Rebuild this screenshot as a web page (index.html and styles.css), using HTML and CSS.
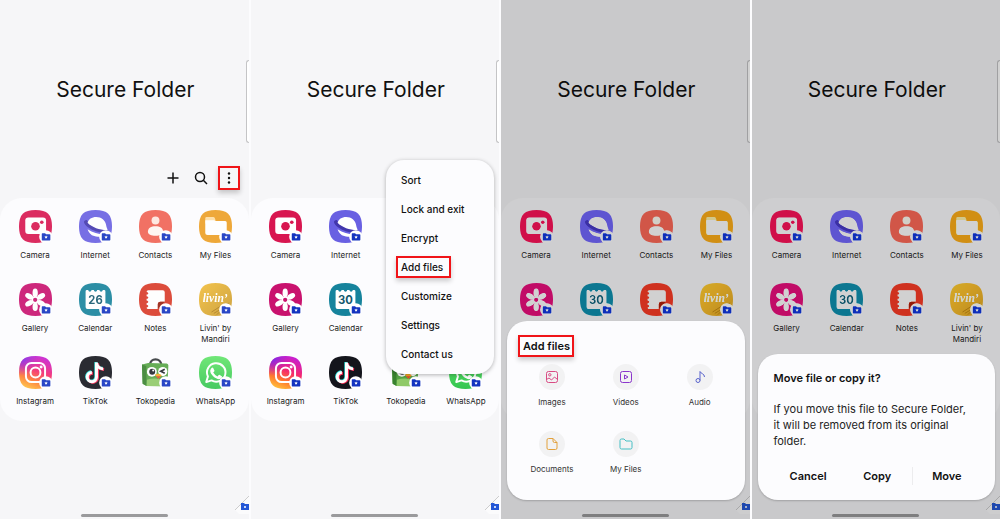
FILE: index.html
```html
<!DOCTYPE html>
<html lang="en">
<head>
<meta charset="utf-8">
<meta name="viewport" content="width=device-width, initial-scale=1">
<title>Secure Folder</title>
<link rel="stylesheet" href="styles.css">
</head>
<body>
<svg class="sprite" aria-hidden="true">
  <defs>
    <linearGradient id="g-insta" x1="0.2" y1="1" x2="0.6" y2="0">
      <stop offset="0" stop-color="#ffc83c"/><stop offset="0.3" stop-color="#ff7a2e"/><stop offset="0.6" stop-color="#f4286e"/><stop offset="1" stop-color="#c81fd0"/>
    </linearGradient>
    <radialGradient id="g-insta2" cx="0.05" cy="0" r="0.6">
      <stop offset="0" stop-color="#5a2cff"/><stop offset="1" stop-color="#a020f0" stop-opacity="0"/>
    </radialGradient>
    <linearGradient id="g-gold" x1="0" y1="0" x2="1" y2="1">
      <stop offset="0" stop-color="#f3be3a"/><stop offset="1" stop-color="#c99a2e"/>
    </linearGradient>
    <linearGradient id="g-wa" x1="0" y1="0" x2="0" y2="1">
      <stop offset="0" stop-color="#62e56a"/><stop offset="1" stop-color="#33c550"/>
    </linearGradient>
    <path id="sq" d="M50 0C86 0 100 14 100 50S86 100 50 100 0 86 0 50 14 0 50 0Z"/>
    <g id="badge">
      <circle cx="81" cy="81" r="20" fill="#fff"/>
      <path fill="#1434c0" d="M69 72.500q0-2 2-2h8l3 3h11q2 0 2 2v15q0 2-2 2h-22q-2 0-2-2z"/>
      <path fill="#fff" d="M82 77l1.500 3 3.500.5-2.500 2.500.5 3.500-3-1.500-3 1.500.5-3.500-2.500-2.500 3.500-.5z"/>
    </g>
  </defs>
  <symbol id="camera" viewBox="0 0 100 100">
    <use href="#sq" fill="#d81650"/>
    <rect x="19" y="23" width="63" height="50" rx="9" fill="#fff"/>
    <circle cx="50" cy="49" r="13" fill="#d81650"/><circle cx="69" cy="37" r="5.500" fill="#d81650"/>
    <use href="#badge"/>
  </symbol>
  <symbol id="internet" viewBox="0 0 100 100">
    <use href="#sq" fill="#6960e2"/>
    <path fill="#4237ac" d="M24 30C10 30 14 42 27 52C46 65 68 71 88 69L88 60C64 60 44 52 30 42Z"/>
    <path fill="#fff" d="M26 39C28 28 39 21 52 21C68 21 80 31 82 45C83 52 86 58 87 61C66 62 40 54 26 39Z"/>
    <path fill="#fff" d="M26 58C42 68 58 73 76 74C68 81 56 83 46 79C36 76 29 68 26 58Z"/>
    <use href="#badge"/>
  </symbol>
  <symbol id="contacts" viewBox="0 0 100 100">
    <use href="#sq" fill="#f06354"/>
    <circle cx="50" cy="32" r="12" fill="#ffe6de"/>
    <path fill="#fff6f2" d="M27 66C27 54 37 49 50 49S73 54 73 66C73 75 63 78 50 78S27 75 27 66Z"/>
    <use href="#badge"/>
  </symbol>
  <symbol id="files" viewBox="0 0 100 100">
    <use href="#sq" fill="#eda024"/>
    <path fill="#ffdda0" d="M19 25q0-4 4-4h20q4 0 5 4l2 6v10h-31z"/>
    <path fill="#fff" d="M19 31h26q3 0 5 2l1 0h28q5 0 5 5v32q0 6-6 6h-52q-7 0-7-6z"/>
    <use href="#badge"/>
  </symbol>
  <symbol id="gallery" viewBox="0 0 100 100">
    <use href="#sq" fill="#c9126e"/>
    <g fill="#fff">
      <ellipse cx="49" cy="30" rx="8" ry="13"/>
      <ellipse cx="49" cy="30" rx="8" ry="13" transform="rotate(60 49 51)"/>
      <ellipse cx="49" cy="30" rx="8" ry="13" transform="rotate(120 49 51)"/>
      <ellipse cx="49" cy="30" rx="8" ry="13" transform="rotate(180 49 51)"/>
      <ellipse cx="49" cy="30" rx="8" ry="13" transform="rotate(240 49 51)"/>
      <ellipse cx="49" cy="30" rx="8" ry="13" transform="rotate(300 49 51)"/>
      <circle cx="49" cy="51" r="11"/>
    </g>
    <circle cx="49" cy="51" r="6.500" fill="#c9126e"/>
    <use href="#badge"/>
  </symbol>
  <symbol id="calendar" viewBox="0 0 100 100">
    <use href="#sq" fill="#16839c"/>
    <path fill="#fff" d="M20 25q0-4 4-4h4c1 7 9 7 10 0h7c1 7 9 7 10 0h7c1 7 9 7 10 0h4q4 0 4 4v48q0 6-6 6h-48q-6 0-6-6z"/>
  </symbol>
  <symbol id="notes" viewBox="0 0 100 100">
    <use href="#sq" fill="#d93a28"/>
    <path fill="#fff" d="M28 22h44q6 0 6 6v29h-13q-8 0-8 8v14h-29q-5 0-5-5c7-1 7-7 0-8v-5c7-1 7-7 0-8v-5c7-1 7-7 0-8v-5c7-1 7-7 0-8q0-5 5-5z"/>
    <path fill="#98200f" d="M78 57h-13q-8 0-8 8v14z"/>
    <use href="#badge"/>
  </symbol>
  <symbol id="livin" viewBox="0 0 100 100">
    <use href="#sq" fill="url(#g-gold)"/>
    <path d="M45 92Q66 76 94 70M38 88Q60 70 90 62M54 96L90 60" fill="none" stroke="#a67718" stroke-width="2.500"/>
    <text x="49" y="59" text-anchor="middle" class="livin-word">livin’</text>
    <use href="#badge"/>
  </symbol>
  <symbol id="instagram" viewBox="0 0 100 100">
    <use href="#sq" fill="url(#g-insta)"/><use href="#sq" fill="url(#g-insta2)"/>
    <rect x="21" y="21" width="58" height="58" rx="17" fill="none" stroke="#fff" stroke-width="6"/>
    <circle cx="50" cy="50" r="15" fill="none" stroke="#fff" stroke-width="6"/><circle cx="67" cy="33" r="4.500" fill="#fff"/>
    <use href="#badge"/>
  </symbol>
  <symbol id="tiktok" viewBox="0 0 100 100">
    <use href="#sq" fill="#14151c"/>
    <g fill="none" stroke-width="9">
      <path stroke="#2de6e0" d="M51 18v44a14 14 0 1 1-14-14M51 19c1 11 8 17 20 18"/>
      <path stroke="#fb2c54" d="M56 22v44a14 14 0 1 1-14-14M56 23c1 11 8 17 20 18"/>
      <path stroke="#fff" d="M53 20v44a14 14 0 1 1-14-14M53 21c1 11 8 17 20 18"/>
    </g>
    <use href="#badge"/>
  </symbol>
  <symbol id="tokopedia" viewBox="0 0 100 100">
    <path d="M33 28C33 4 67 4 68 28" fill="none" stroke="#34383b" stroke-width="7"/>
    <path fill="#56a545" d="M9 26L28 21L84 23Q89 24 89 29L86 92L23 91L11 84Z"/>
    <path fill="#39822f" d="M9 26L22 30L23 91L11 84Z"/>
    <path fill="#8fca68" d="M24 72Q55 62 86 78L86 92L23 91Z"/>
    <circle cx="39" cy="48" r="15" fill="#fff"/><circle cx="72" cy="47" r="14" fill="#fff"/>
    <circle cx="40" cy="48" r="9" fill="#20242a"/><circle cx="43" cy="44" r="3" fill="#fff"/>
    <path d="M78 40L66 46L78 52" fill="none" stroke="#20242a" stroke-width="5"/>
    <path fill="#f6a81f" d="M48 57Q58 50 69 58L59 69Z"/><path fill="#dc4631" d="M51 61L67 61L59 69Z"/>
    <use href="#badge"/>
  </symbol>
  <symbol id="whatsapp" viewBox="0 0 100 100">
    <use href="#sq" fill="url(#g-wa)"/>
    <path d="M22 79L27 62A28 28 0 1 1 38 74Z" fill="none" stroke="#fff" stroke-width="6" stroke-linejoin="round"/>
    <path fill="#fff" d="M38 36q3-2 5 0l4 9q0 2-4 5 5 8 13 12 4-6 6-5l8 5q0 7-7 8c-11 2-30-14-29-26q1-5 4-8z"/>
    <use href="#badge"/>
  </symbol>
  <symbol id="fold" viewBox="0 0 14 18">
    <path d="M0 14L14 0V18H4Z" fill="#fff" fill-opacity="0.5"/>
    <path d="M0 14L14 0" stroke="#b9b9b9" stroke-width="0.700"/>
    <path fill="#2457d6" d="M6 7h3l1 1h4v6H6z"/>
    <circle cx="10" cy="11" r="1" fill="#fff"/>
  </symbol>
</svg>

<main class="screens">
  <section class="screen faded">
    <header class="head">
      <h1>Secure Folder</h1>
      <div class="tools">
        <button type="button" aria-label="Add"><svg viewBox="0 0 14 14"><path d="M7 1.500v11M1.500 7h11"/></svg></button>
        <button type="button" aria-label="Search"><svg viewBox="0 0 14 14"><circle cx="6" cy="6" r="4.500"/><path d="M9.300 9.300L13 13"/></svg></button>
        <button type="button" class="mark" aria-label="More options"><svg viewBox="0 0 14 14" class="dots"><circle cx="7" cy="2.500" r="1.200"/><circle cx="7" cy="7" r="1.200"/><circle cx="7" cy="11.500" r="1.200"/></svg></button>
      </div>
    </header>
    <nav class="apps">
      <a href="#"><svg><use href="#camera"/></svg>Camera</a>
      <a href="#"><svg><use href="#internet"/></svg>Internet</a>
      <a href="#"><svg><use href="#contacts"/></svg>Contacts</a>
      <a href="#"><svg><use href="#files"/></svg>My Files</a>
      <a href="#"><svg><use href="#gallery"/></svg>Gallery</a>
      <a href="#"><svg viewBox="0 0 100 100"><use href="#calendar"/><text x="50" y="63" class="day">26</text><use href="#badge"/></svg>Calendar</a>
      <a href="#"><svg><use href="#notes"/></svg>Notes</a>
      <a href="#"><svg><use href="#livin"/></svg>Livin' by Mandiri</a>
      <a href="#"><svg><use href="#instagram"/></svg>Instagram</a>
      <a href="#"><svg><use href="#tiktok"/></svg>TikTok</a>
      <a href="#"><svg><use href="#tokopedia"/></svg>Tokopedia</a>
      <a href="#"><svg><use href="#whatsapp"/></svg>WhatsApp</a>
    </nav>
    <footer class="foot"><svg class="fold"><use href="#fold"/></svg><div class="homebar"></div></footer>
    <div class="edge"></div>
  </section>

  <section class="screen">
    <header class="head"><h1>Secure Folder</h1></header>
    <nav class="apps">
      <a href="#"><svg><use href="#camera"/></svg>Camera</a>
      <a href="#"><svg><use href="#internet"/></svg>Internet</a>
      <a href="#" aria-label="Contacts"><svg><use href="#contacts"/></svg></a>
      <a href="#" aria-label="My Files"><svg><use href="#files"/></svg></a>
      <a href="#"><svg><use href="#gallery"/></svg>Gallery</a>
      <a href="#"><svg viewBox="0 0 100 100"><use href="#calendar"/><text x="50" y="63" class="day">30</text><use href="#badge"/></svg>Calendar</a>
      <a href="#" aria-label="Notes"><svg><use href="#notes"/></svg></a>
      <a href="#" aria-label="Livin' by Mandiri"></a>
      <a href="#"><svg><use href="#instagram"/></svg>Instagram</a>
      <a href="#"><svg><use href="#tiktok"/></svg>TikTok</a>
      <a href="#"><svg><use href="#tokopedia"/></svg>Tokopedia</a>
      <a href="#"><svg><use href="#whatsapp"/></svg>WhatsApp</a>
    </nav>
    <footer class="foot"><svg class="fold"><use href="#fold"/></svg><div class="homebar"></div></footer>
    <div class="edge"></div>
    <div class="menu">
      <button type="button">Sort</button>
      <button type="button">Lock and exit</button>
      <button type="button">Encrypt</button>
      <button type="button"><span class="mark">Add files</span></button>
      <button type="button">Customize</button>
      <button type="button">Settings</button>
      <button type="button">Contact us</button>
    </div>
  </section>

  <section class="screen dimmed">
    <header class="head"><h1>Secure Folder</h1></header>
    <nav class="apps">
      <a href="#"><svg><use href="#camera"/></svg>Camera</a>
      <a href="#"><svg><use href="#internet"/></svg>Internet</a>
      <a href="#"><svg><use href="#contacts"/></svg>Contacts</a>
      <a href="#"><svg><use href="#files"/></svg>My Files</a>
      <a href="#" aria-label="Gallery"><svg><use href="#gallery"/></svg></a>
      <a href="#" aria-label="Calendar"><svg viewBox="0 0 100 100"><use href="#calendar"/><text x="50" y="63" class="day">30</text><use href="#badge"/></svg></a>
      <a href="#" aria-label="Notes"><svg><use href="#notes"/></svg></a>
      <a href="#" aria-label="Livin' by Mandiri"><svg><use href="#livin"/></svg></a>
    </nav>
    <footer class="foot"><svg class="fold"><use href="#fold"/></svg><div class="homebar"></div></footer>
    <div class="edge"></div>
    <div class="scrim"></div>
    <div class="sheet">
      <h2><span class="mark">Add files</span></h2>
      <div class="kinds">
        <button type="button"><span class="disc"><svg viewBox="0 0 14 14" stroke="#d94b84"><rect x="1.500" y="1.500" width="11" height="11" rx="2"/><circle cx="4.800" cy="4.800" r="1.200"/><path d="M1.500 9.500l2.500-1.500 2.500 2 3-3 3 2.500"/></svg></span>Images</button>
        <button type="button"><span class="disc"><svg viewBox="0 0 14 14" stroke="#8a35cc"><rect x="1.500" y="1.500" width="11" height="11" rx="2"/><path d="M5.500 5v4l3.500-2z"/></svg></span>Videos</button>
        <button type="button"><span class="disc"><svg viewBox="0 0 14 14" stroke="#5963cc"><circle cx="5" cy="10.500" r="2"/><path d="M7 10.500v-9c1 2.500 4.500 2 4.500 5.500"/></svg></span>Audio</button>
        <button type="button"><span class="disc"><svg viewBox="0 0 14 14" stroke="#e2a13c"><path d="M3.500 1.500h4.500l4 4v5.500q0 1.500-1.500 1.500h-7q-1.500 0-1.500-1.500v-8q0-1.500 1.500-1.500zM8 1.500v2.500q0 1.500 1.500 1.500h2.500"/></svg></span>Documents</button>
        <button type="button"><span class="disc"><svg viewBox="0 0 14 14" stroke="#45bfc4"><path d="M1 3.500q0-1.500 1.500-1.500h2.500l2 2h4.500q1.500 0 1.500 1.500v5q0 1.500-1.500 1.500h-9q-1.500 0-1.500-1.500z"/></svg></span>My Files</button>
      </div>
    </div>
  </section>

  <section class="screen dimmed">
    <header class="head"><h1>Secure Folder</h1></header>
    <nav class="apps">
      <a href="#"><svg><use href="#camera"/></svg>Camera</a>
      <a href="#"><svg><use href="#internet"/></svg>Internet</a>
      <a href="#"><svg><use href="#contacts"/></svg>Contacts</a>
      <a href="#"><svg><use href="#files"/></svg>My Files</a>
      <a href="#"><svg><use href="#gallery"/></svg>Gallery</a>
      <a href="#"><svg viewBox="0 0 100 100"><use href="#calendar"/><text x="50" y="63" class="day">30</text><use href="#badge"/></svg>Calendar</a>
      <a href="#"><svg><use href="#notes"/></svg>Notes</a>
      <a href="#"><svg><use href="#livin"/></svg>Livin' by Mandiri</a>
    </nav>
    <footer class="foot"><svg class="fold"><use href="#fold"/></svg><div class="homebar"></div></footer>
    <div class="edge"></div>
    <div class="scrim"></div>
    <div class="dialog" role="dialog" aria-labelledby="dlg-title">
      <h2 id="dlg-title">Move file or copy it?</h2>
      <p>If you move this file to Secure Folder, it will be removed from its original folder.</p>
      <div class="actions">
        <button type="button">Cancel</button>
        <button type="button">Copy</button>
        <button type="button">Move</button>
      </div>
    </div>
  </section>
</main>
</body>
</html>
```
FILE: styles.css
```css
* { box-sizing: border-box; }
body {
  margin: 0;
  background: #fcfcfe;
  color: #111;
  font-family: Inter, Roboto, sans-serif;
}
h1, h2, p { margin: 0; }
button {
  border: 0;
  padding: 0;
  background: none;
  color: inherit;
  font: inherit;
  cursor: pointer;
}
.sprite { position: absolute; width: 0; height: 0; }

.screens {
  display: grid;
  grid-template-columns: repeat(4, 1fr);
  gap: 2px;
  min-height: 100vh;
}
.screen {
  position: relative;
  display: flex;
  flex-direction: column;
  min-width: 0;
  background: #f6f6f8;
}

.head {
  display: flex;
  flex-direction: column;
  height: 198px;
  padding-top: 75px;
}
h1 {
  padding-left: 2px;
  font-size: 21px;
  font-weight: 400;
  line-height: 30px;
  text-align: center;
}
.tools {
  display: flex;
  justify-content: flex-end;
  align-items: center;
  gap: 6px;
  margin-top: auto;
  padding: 0 9px 8px 0;
}
.tools button {
  display: grid;
  place-items: center;
  width: 22px;
  height: 24px;
}
.tools svg {
  width: 14px;
  height: 14px;
  fill: none;
  stroke: #111;
  stroke-width: 1.500;
}
.tools .dots { fill: #111; stroke: none; }
.mark {
  border: 2px solid #f01418;
  box-shadow: 0 3px 5px rgba(0, 0, 0, 0.2);
}

.apps {
  display: grid;
  grid-template-columns: repeat(4, 1fr);
  grid-auto-rows: 62px;
  row-gap: 11px;
  min-height: 223px;
  padding: 12px 3px 3px 5px;
  border-radius: 22px;
  background: #fcfcfe;
}
.apps a {
  display: flex;
  flex-direction: column;
  align-items: center;
  padding: 0 8px;
  color: #222;
  font-size: 8px;
  line-height: 11px;
  text-align: center;
  text-decoration: none;
}
.apps svg {
  flex: none;
  width: 33px;
  height: 33px;
  margin-bottom: 7px;
}
.faded .apps svg { opacity: 0.9; }
.dimmed .apps svg { filter: brightness(1.1) saturate(1.1); }
.day {
  fill: #14596e;
  font-size: 34px;
  font-weight: 700;
  text-anchor: middle;
}
.livin-word {
  fill: #fff;
  font-family: "Liberation Serif", serif;
  font-size: 35px;
  font-style: italic;
  font-weight: 700;
}

.foot {
  display: flex;
  flex-direction: column;
  align-items: center;
  margin-top: auto;
  padding-bottom: 2px;
}
.fold { align-self: flex-end; width: 14px; height: 18px; }
.homebar {
  width: 35%;
  height: 3px;
  border-radius: 2px;
  background: #9a9a9c;
}
.edge {
  position: absolute;
  top: 60px;
  right: 0;
  width: 3px;
  height: 83px;
  border: 1px solid #c4c4c6;
  border-right: 0;
  border-radius: 3px 0 0 3px;
  background: #fff;
}
.scrim {
  position: absolute;
  inset: 0;
  background: rgba(0, 0, 0, 0.18);
}

.menu {
  position: absolute;
  top: 160px;
  right: 5px;
  display: flex;
  flex-direction: column;
  width: 108px;
  padding: 5px 0 6px;
  border-radius: 18px;
  background: #fcfcfe;
  box-shadow: 0 1px 4px rgba(0, 0, 0, 0.3);
}
.menu button {
  height: 29px;
  padding-left: 15px;
  font-size: 10px;
  font-weight: 500;
  text-align: left;
}
.menu .mark {
  display: inline-block;
  margin-left: -5px;
  padding: 0 6px 0 3px;
  line-height: 18px;
}

.sheet, .dialog {
  position: absolute;
  right: 5px;
  bottom: 19px;
  left: 6px;
  border-radius: 20px;
  background: #fcfcfe;
  box-shadow: 0 1px 2px rgba(0, 0, 0, 0.2);
}
.sheet { padding: 14px 8px 22px; }
.sheet h2 {
  display: flex;
  padding-left: 3px;
  font-size: 11px;
  font-weight: 600;
  line-height: 18px;
}
.sheet .mark { padding: 0 2px 0 3px; }
.kinds {
  display: grid;
  grid-template-columns: repeat(3, 1fr);
  row-gap: 20px;
  margin-top: 7px;
}
.kinds button {
  display: flex;
  flex-direction: column;
  align-items: center;
  gap: 3px;
  color: #333;
  font-size: 8px;
  line-height: 18px;
}
.disc {
  display: grid;
  place-items: center;
  width: 26px;
  height: 26px;
  border-radius: 50%;
  background: #f2f2f3;
}
.disc svg { width: 14px; height: 14px; fill: none; }

.dialog { padding: 16px 14px 15px 16px; }
.dialog h2 {
  font-size: 11px;
  font-weight: 600;
  line-height: 16px;
}
.dialog p {
  margin: 15px 8px 0 0;
  color: #222;
  font-size: 11px;
  line-height: 16px;
}
.actions {
  display: grid;
  grid-template-columns: repeat(3, 1fr);
  margin-top: 18px;
}
.actions button {
  font-size: 11px;
  font-weight: 600;
  line-height: 18px;
}
.actions button + button + button { border-left: 1px solid #ececee; }
```
